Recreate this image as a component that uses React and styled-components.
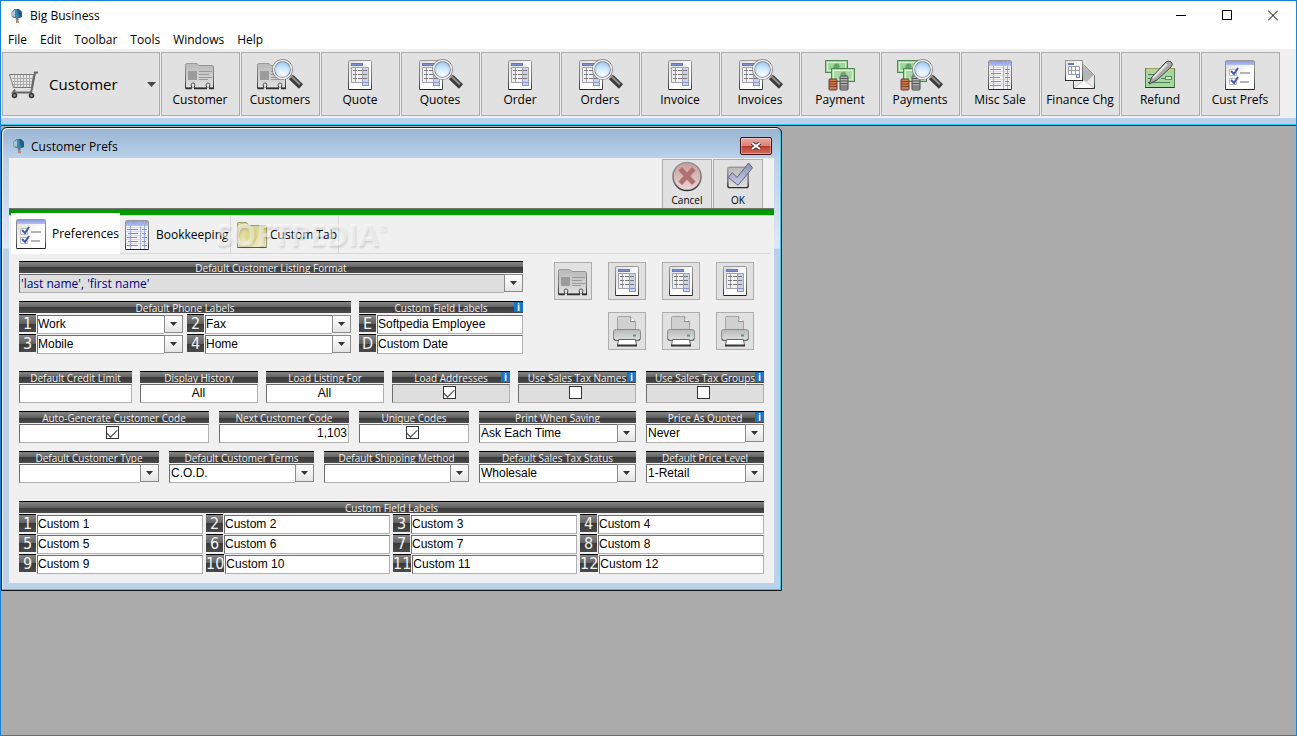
import React from 'react';
import styled, { createGlobalStyle, css } from 'styled-components';

const GlobalStyle = createGlobalStyle`
  * {
    box-sizing: border-box;
  }
  body {
    margin: 0;
    font-family: 'Open Sans', 'Noto Sans', sans-serif;
    font-size: 12px;
    color: #000;
  }
  button,
  input,
  select {
    font: inherit;
    color: inherit;
    margin: 0;
    padding: 0;
    border: 0;
    border-radius: 0;
    background: none;
  }
`;

/* ---------- application window ---------- */

const AppWindow = styled.div`
  display: flex;
  flex-direction: column;
  min-height: 100vh;
  border: 1px solid #1883d7;
  background: #fff;
`;

const TitleBar = styled.header`
  display: flex;
  align-items: center;
  height: 29px;
  padding-left: 8px;
`;

const AppTitle = styled.h1`
  flex: 1;
  margin: 0 0 0 5px;
  font-size: 12px;
  font-weight: 400;
`;

const WindowControl = styled.button`
  display: grid;
  place-items: center;
  width: 46px;
  height: 29px;
`;

const MenuBar = styled.nav`
  display: flex;
  height: 19px;
  button {
    padding: 0 6px 0 7px;
    line-height: 20px;
  }
`;

const Toolbar = styled.div`
  display: flex;
  gap: 1px;
  padding: 3px 1px 2px;
  background: #f0f0f0;
`;

const raised = css`
  background: #e1e1e1;
  border: 1px solid #adadad;
`;

const ModulePicker = styled.label`
  ${raised}
  display: flex;
  align-items: center;
  flex: 0 0 158px;
  height: 64px;
  padding: 0 3px 0 5px;
  select {
    appearance: none;
    flex: 1;
    min-width: 0;
    height: 62px;
    margin-left: 9px;
    font-size: 15px;
  }
`;

const ToolButton = styled.button`
  ${raised}
  display: flex;
  flex-direction: column;
  align-items: center;
  flex: 0 0 79px;
  height: 64px;
  padding: 6px 1px 0 0;
  line-height: 17px;
  white-space: nowrap;
`;

const Workspace = styled.main`
  flex: 1;
  padding-top: 1px;
  background: #ababab;
  border-top: 1px solid #333;
`;

const ToolbarEdge = styled.div`
  height: 7px;
  background: #b9d1ea;
  border-bottom: 1px solid #35c8ec;
`;

/* ---------- child window ---------- */

const ChildWindow = styled.section`
  width: 781px;
  max-width: 100%;
  padding: 0 7px 7px;
  border: 1px solid #111;
  border-radius: 6px 6px 0 0;
  background: linear-gradient(
    #99b4d1 0,
    #b9d1ea 30px,
    #dde9f6 120px,
    #b9d1ea 121px
  );
  box-shadow: inset -1px -1px 0 #35c8ec, inset 1px 1px 0 #f4f8fc;
`;

const ChildTitleBar = styled.header`
  display: flex;
  align-items: center;
  height: 30px;
  padding: 6px 2px 0 2px;
  h2 {
    flex: 1;
    margin: 0 0 0 4px;
    font-size: 12px;
    font-weight: 400;
  }
`;

const CloseButton = styled.button`
  display: grid;
  place-items: center;
  width: 32px;
  height: 18px;
  border: 1px solid #3f1220;
  border-radius: 2px;
  background: linear-gradient(#e8a79c, #d98378 48%, #b8392a 50%, #d0705c);
  box-shadow: inset 0 0 0 1px rgba(255, 255, 255, 0.35);
`;

const ChildBody = styled.div`
  background: #f0f0f0;
`;

const ActionBar = styled.div`
  display: flex;
  justify-content: flex-end;
  gap: 1px;
  height: 50px;
  padding: 1px 11px 0 0;
`;

const ActionButton = styled.button`
  ${raised}
  border-bottom: 0;
  display: flex;
  flex-direction: column;
  align-items: center;
  width: 50px;
  font-size: 10px;
  line-height: 16px;
`;

const GreenRule = styled.div`
  height: 8px;
  background: #090;
  border-top: 1px solid #777;
  border-bottom: 1px solid #c4d4c4;
`;

const TabStrip = styled.div`
  position: relative;
  display: flex;
  height: 38px;
  margin: 0 4px 0 2px;
  border-bottom: 1px solid #d9d9d9;
`;

const Tab = styled.button`
  display: flex;
  align-items: center;
  gap: ${(props) => props.$gap}px;
  width: ${(props) => props.$width}px;
  padding-left: ${(props) => (props.$active ? 4 : 5)}px;
  border-right: 1px solid #d9d9d9;
  white-space: nowrap;
  ${(props) =>
    props.$active &&
    css`
      position: relative;
      height: 41px;
      margin-top: -3px;
      background: #fff;
      border-right: 0;
    `}
`;

const Watermark = styled.span`
  position: absolute;
  left: 205px;
  top: -1px;
  font-size: 30px;
  font-weight: 700;
  line-height: 40px;
  color: rgba(255, 255, 255, 0.5);
  text-shadow: 1px 2px 2px rgba(0, 0, 0, 0.12);
  pointer-events: none;
  sup {
    font-size: 10px;
    line-height: 10px;
    vertical-align: 14px;
  }
`;

/* ---------- form ---------- */

const Form = styled.form`
  padding: 7px 10px 9px;
`;

const TopArea = styled.div`
  display: flex;
  justify-content: space-between;
  padding-right: 10px;
`;

const TopFields = styled.div`
  display: grid;
  gap: 8px;
  flex: 0 1 504px;
`;

const Columns = styled.div`
  display: grid;
  grid-template-columns: ${(props) =>
    props.$cols.map((n) => `minmax(0, ${n}fr)`).join(' ')};
  column-gap: ${(props) => props.$gap}px;
`;

const Stack = styled.div`
  display: grid;
  gap: 8px;
`;

const Options = styled(Columns)`
  margin: 17px 0 18px;
`;

const dark = css`
  color: #f2f2f2;
  border-top: 1px solid #000;
  background: linear-gradient(#858585, #606060 50%, #3a3a3a 50%, #4a4a4a);
`;

const Caption = styled.div`
  ${dark}
  display: flex;
  height: 12px;
  margin-bottom: 1px;
  padding-left: ${(props) => (props.$info ? 9 : 0)}px;
  font-size: 10px;
  line-height: 12px;
  white-space: nowrap;
  label,
  span {
    flex: 1;
    text-align: center;
  }
`;

const InfoButton = styled.button`
  width: 9px;
  height: 10px;
  background: #1874c4;
  color: #fff;
  font-size: 10px;
  font-weight: 700;
  line-height: 10px;
`;

const Box = styled.div`
  display: flex;
  justify-content: center;
  align-items: center;
  height: 19px;
  padding: 0 4px 2px 0;
  border: 1px solid;
  border-color: #6e6e6e #b0b0b0 #b0b0b0 #6e6e6e;
  background: ${(props) => (props.$gray ? '#dedede' : '#fff')};
`;

const TextInput = styled.input`
  flex: 1;
  width: 100%;
  min-width: 0;
  height: 19px;
  padding: 0 1px 1px 0;
  border: 1px solid;
  border-color: #6e6e6e #b0b0b0 #b0b0b0 #6e6e6e;
  background: #fff;
  font-family: 'Liberation Sans', Arial, sans-serif;
  text-align: ${(props) => props.$align || 'left'};
`;

const Check = styled.input`
  appearance: none;
  display: grid;
  justify-items: center;
  width: 13px;
  height: 13px;
  border: 1px solid #333;
  background: #fff;
  &:checked::after {
    content: '';
    width: 5px;
    height: 9px;
    border: solid #333;
    border-width: 0 1px 1px 0;
    transform: rotate(45deg);
  }
`;

const SelectWrap = styled.div`
  display: flex;
  flex: 1;
  min-width: 0;
  height: 19px;
  select {
    appearance: none;
    flex: 1;
    min-width: 0;
    padding: 0 1px 1px;
    border: 1px solid;
    border-color: #6e6e6e #b0b0b0 #b0b0b0 #6e6e6e;
    border-right: 0;
    background: ${(props) => (props.$gray ? '#dedede' : '#fff')};
    color: ${(props) => (props.$gray ? '#00008b' : '#000')};
    font-family: ${(props) =>
      props.$gray ? 'inherit' : "'Liberation Sans', Arial, sans-serif"};
  }
`;

const ArrowBox = styled.span`
  display: grid;
  place-items: center;
  width: 19px;
  height: 18px;
  padding-bottom: 1px;
  border: 1px solid #8a8a8a;
  background: linear-gradient(#fff, #e4e4e4);
`;

const Numbered = styled.div`
  display: flex;
  gap: 1px;
  height: 20px;
  padding-top: 1px;
  select {
    padding-left: 0;
  }
`;

const NumberLabel = styled.label`
  ${dark}
  flex: 0 0 17px;
  height: 18px;
  margin-top: -1px;
  font-family: 'DejaVu Sans Condensed', 'DejaVu Sans', sans-serif;
  font-stretch: condensed;
  font-size: 16px;
  line-height: 18px;
  text-align: center;
  white-space: nowrap;
`;

const IconGrid = styled.div`
  display: grid;
  grid-template-columns: repeat(4, 38px);
  grid-auto-rows: 38px;
  gap: 12px 16px;
  padding-top: 1px;
`;

const SquareButton = styled.button`
  ${raised}
  display: grid;
  place-items: center;
  &.second-column {
    grid-column: 2;
  }
`;

/* ---------- icons ---------- */

const DefsSvg = styled.svg`
  position: absolute;
  width: 0;
  height: 0;
`;

const IconDefs = () => (
  <DefsSvg aria-hidden="true">
    <defs>
      <linearGradient id="paper" x1="0" y1="0" x2="1" y2="1">
        <stop offset="0" stopColor="#dcdcdc" />
        <stop offset="0.6" stopColor="#fff" />
      </linearGradient>
      <linearGradient id="metal" x1="0" y1="0" x2="0" y2="1">
        <stop offset="0" stopColor="#b9b9b9" />
        <stop offset="1" stopColor="#e0e0e0" />
      </linearGradient>
      <linearGradient id="outline" x1="0" y1="0" x2="0" y2="1">
        <stop offset="0" stopColor="#9a9a9a" />
        <stop offset="0.7" stopColor="#6a6a6a" />
        <stop offset="1" stopColor="#2a2a2a" />
      </linearGradient>
      <radialGradient id="lens" cx="0.5" cy="0.8" r="0.8">
        <stop offset="0" stopColor="#fafdff" />
        <stop offset="0.5" stopColor="#cfe8ff" />
        <stop offset="1" stopColor="#8cc0f4" />
      </radialGradient>
      <linearGradient id="banner" x1="0" y1="0" x2="0" y2="1">
        <stop offset="0" stopColor="#8c9be0" />
        <stop offset="1" stopColor="#b4c0f6" />
      </linearGradient>
      <linearGradient id="folder" x1="0" y1="0" x2="0" y2="1">
        <stop offset="0" stopColor="#d3cf8e" />
        <stop offset="1" stopColor="#efecc0" />
      </linearGradient>
      <linearGradient id="tick" x1="0" y1="0" x2="0" y2="1">
        <stop offset="0" stopColor="#8992b8" />
        <stop offset="1" stopColor="#c5cdea" />
      </linearGradient>
      <linearGradient id="red" x1="0" y1="0" x2="0" y2="1">
        <stop offset="0" stopColor="#c99c9c" />
        <stop offset="1" stopColor="#e8d6d6" />
      </linearGradient>
    </defs>
  </DefsSvg>
);

const Svg = ({ w = 32, h = 32, children }) => (
  <svg width={w} height={h} viewBox={`0 0 ${w} ${h}`} aria-hidden="true">
    {children}
  </svg>
);

const Report = () => (
  <g>
    <rect x="0.5" y="1.5" width="23" height="29" rx="1" fill="url(#paper)" stroke="url(#outline)" />
    <path d="M0.5 30.5h23" stroke="#222" />
    <rect x="3.5" y="4.5" width="11" height="2" fill="#7c90d4" stroke="#6479c0" />
    <path d="M3.5 8.5h17v15h-17z" fill="#f1f1f4" stroke="#a2a2aa" />
    <rect x="14" y="9" width="6" height="15" fill="#cdd2ea" />
    <path d="M7.5 8.5v15M14.5 8.5v15M20.5 8.5v15" stroke="#a2a2aa" />
    <path d="M5 11.5h14M5 15.5h14M5 19.5h14" stroke="#777" strokeDasharray="4 1" />
    <rect x="14.5" y="23.5" width="6" height="3" fill="#cbd5f8" stroke="#8596d4" />
  </g>
);

const Rolodex = () => (
  <g>
    <path
      d="M1.5 29V6q0-1.500 1.500-1.500h10l2 2h13q1.500 0 1.500 1.500v21h-4.500q2-5-1-5t-1 5h-13q2-5-1-5t-1 5z"
      fill="url(#metal)"
      stroke="url(#outline)"
    />
    <path d="M1.500 29.500h6M10 29.500h13M25 29.500h5" stroke="#2d2d2d" strokeWidth="1.500" />
    <rect x="4" y="12" width="9" height="9" fill="#9c9c9c" />
    <path d="M15 12.500h13M15 15.500h10M15 18.500h13M15 20.500h9" stroke="#999" />
  </g>
);

const Money = () => (
  <g>
    <rect x="1.500" y="1.500" width="22" height="12" fill="#9fd49c" stroke="#4c8850" />
    <rect x="3.500" y="3.500" width="18" height="8" fill="none" stroke="#d8f0d4" />
    <circle cx="12.500" cy="7.500" r="3" fill="#5fa566" />
    <rect x="7.500" y="9.500" width="23" height="13" fill="#a8dba4" stroke="#4c8850" />
    <rect x="9.500" y="11.500" width="19" height="9" fill="none" stroke="#dff5da" />
    <circle cx="19.500" cy="15.500" r="3" fill="#6cae70" />
    <rect x="5" y="20" width="8" height="11" rx="1" fill="#d2794f" stroke="#643a28" />
    <path d="M5 22.500h8M5 25h8M5 27.500h8" stroke="#7d442d" />
    <rect x="16" y="17" width="8" height="14" rx="1" fill="#b4b4b4" stroke="#4a4a4a" />
    <path d="M16 19.500h8M16 22h8M16 24.500h8M16 27h8M16 29h8" stroke="#555" />
  </g>
);

const Glass = () => (
  <g>
    <path d="M35 18l10 9.500" stroke="#3a3a3a" strokeWidth="6" />
    <path d="M35 17l9 8.500" stroke="#8f8f8f" strokeWidth="2" />
    <circle cx="26.500" cy="10.500" r="9" fill="url(#lens)" stroke="#777" strokeWidth="3" />
    <circle cx="26.500" cy="10.500" r="9" fill="none" stroke="#efefef" strokeWidth="1.500" />
  </g>
);

const Ledger = () => (
  <g>
    <rect x="0.500" y="1.500" width="23" height="29" rx="1" fill="#f4f4f6" stroke="url(#outline)" />
    <rect x="1" y="2" width="22" height="5" fill="url(#banner)" />
    <path d="M1 8.500h22M1 12.500h22M1 16.500h22M1 20.500h22M1 24.500h22" stroke="#d5d9ee" />
    <path d="M5.500 2v28M15.500 2v28M19.500 2v28" stroke="#a3afe0" />
    <path d="M2 10.500h11M3 14.500h10M2 18.500h10M3 22.500h10M2 26.500h11M17 10.500h5M17 14.500h4M17 18.500h5M17 22.500h4M17 26.500h5" stroke="#8d8d8d" />
    <path d="M0.500 30.500h23" stroke="#222" />
  </g>
);

const Checklist = () => (
  <g>
    <rect x="1.500" y="1.500" width="29" height="29" rx="1" fill="url(#paper)" stroke="url(#outline)" />
    <rect x="2" y="2" width="28" height="4" fill="url(#banner)" />
    <path d="M5.500 10.500h7v6h-7zM5.500 19.500h7v6h-7z" fill="#fff" stroke="#bbb" />
    <path d="M7 12l3 3 4-6M7 21l3 3 4-6" fill="none" stroke="#3f57b4" strokeWidth="2" />
    <path d="M16 14h10M16 23h9" stroke="#b4b4b4" strokeWidth="2" />
    <path d="M1.500 30.500h29" stroke="#222" />
  </g>
);

const FinanceCharge = () => (
  <g>
    <path d="M9.500 29.500v-15l10-9 11 11v13z" fill="#e9e9e9" stroke="url(#outline)" />
    <path d="M18 5l12 11-9 8-3-3z" fill="#b5b5b5" />
    <path d="M10 29l10-8 10 8" fill="#fafafa" stroke="#c4c4c4" />
    <rect x="1.500" y="1.500" width="17" height="20" fill="url(#paper)" stroke="url(#outline)" />
    <rect x="4" y="4" width="6" height="2" fill="#6479c0" />
    <path d="M4.500 7.500h11v8h-11zM7.500 7.500v8M11.500 7.500v8M4.500 11.500h11" fill="none" stroke="#9a9aa8" />
    <rect x="12.500" y="15.500" width="3" height="3" fill="#dbe2fb" stroke="#6f82cc" />
  </g>
);

const RefundCheck = () => (
  <g>
    <rect x="1.500" y="9.500" width="29" height="19" fill="#a5d8a0" stroke="#567a56" />
    <path d="M2 10.500h28" stroke="#dcc77c" strokeWidth="2" />
    <path d="M4 15.500h9M4 19.500h7M4 23.500h22M17 19.500h4" stroke="#4e7e50" />
    <rect x="21.500" y="17.500" width="6" height="3" fill="#c8eec2" stroke="#5b8a5b" />
    <path d="M1.500 28.500h29" stroke="#333" />
    <path d="M5 25l3-7L22 3q2-2 5 0t0 5L13 21z" fill="#a9a9a9" stroke="#444" />
    <path d="M9 19L23 5" stroke="#e4e4e4" strokeWidth="2" />
  </g>
);

const Printer = () => (
  <g>
    <path d="M6.500 15.500v-13q0-1 1-1h12l5 5v9z" fill="#d0d0d0" stroke="#a4a4a4" />
    <path d="M19.500 1.500q1 4 0 5h5" fill="#fff" stroke="#8b8b8b" />
    <path d="M2.500 16.500q0-2 3-2h21q3 0 3 2v7q0 2-2 2h-23q-2 0-2-2z" fill="url(#metal)" stroke="#8a8a8a" />
    <path d="M3 23.500q0 2 3 2h20q3 0 3-2" fill="none" stroke="#555" />
    <path d="M7.500 24.500h17l1 6h-19z" fill="#fff" stroke="#666" />
    <path d="M6 30.500h20" stroke="#333" strokeWidth="2" />
    <path d="M22 20.500h3" stroke="#3fa77d" strokeWidth="2" />
  </g>
);

const Folder = () => (
  <g>
    <path d="M1.500 28.500v-24q0-1 1-1h8l2 3h17q1 0 1 1v21z" fill="url(#folder)" stroke="#a09c68" />
    <circle cx="15" cy="16" r="7" fill="#dcd775" opacity="0.600" />
    <path d="M1.500 28.500h29" stroke="#5c5a3c" />
  </g>
);

const Cart = () => (
  <Svg w={32} h={30}>
    <path d="M1.500 5.500h24l-2 13h-18z" fill="#e8e8e8" stroke="#777" />
    <path d="M4 9.500h20M5 12.500h19M5 15.500h18M6.500 6v12M9.500 6v12M12.500 6v12M15.500 6v12M18.500 6v12M21.500 6v12" stroke="#aaa" />
    <path d="M30 3.500h-3l-3 16-1 4H5l2-3" fill="none" stroke="#666" strokeWidth="2" />
    <circle cx="6.500" cy="26.500" r="2" fill="#999" stroke="#333" strokeWidth="1.500" />
    <circle cx="23.500" cy="26.500" r="2" fill="#999" stroke="#333" strokeWidth="1.500" />
  </Svg>
);

const AppLogo = () => (
  <Svg w={16} h={16}>
    <path d="M2.500 8V4l3-3h4l3.500 3v5l-3 1H4.500z" fill="#3c86ae" />
    <path d="M8 1l2 0 3 3v5l-3 1z" fill="#205e86" />
    <path d="M3 8V4l3-2v7z" fill="#a9c6d4" />
    <path d="M6.500 10h3v2l-1 1h-1z" fill="#777" />
    <path d="M7 13h3v2H7z" fill="#c08068" />
  </Svg>
);

const CancelIcon = () => (
  <Svg w={32} h={33}>
    <circle cx="16" cy="17" r="14.500" fill="url(#red)" stroke="url(#outline)" strokeWidth="1.500" />
    <path d="M9 9l14 15M23 9L9 24" stroke="#b07070" strokeWidth="5" />
  </Svg>
);

const OkIcon = () => (
  <Svg w={32} h={33}>
    <rect x="5.500" y="7.500" width="21" height="21" rx="2" fill="url(#metal)" stroke="url(#outline)" strokeWidth="1.500" />
    <path d="M6 18l4-5 5 5L27 3l4 5-15 18z" fill="url(#tick)" stroke="#5b6076" />
  </Svg>
);

const Arrow = () => (
  <svg width="9" height="5" viewBox="0 0 9 5" aria-hidden="true">
    <path d="M0 0h9L4.500 5z" fill="#444" />
  </svg>
);

const SmallArrow = () => (
  <svg width="7" height="4" viewBox="0 0 7 4" aria-hidden="true">
    <path d="M0 0h7L3.500 4z" fill="#333" />
  </svg>
);

/* ---------- data ---------- */

const menus = ['File', 'Edit', 'Toolbar', 'Tools', 'Windows', 'Help'];

const tools = [
  { label: 'Customer', icon: Rolodex },
  { label: 'Customers', icon: Rolodex, search: true },
  { label: 'Quote', icon: Report, narrow: true },
  { label: 'Quotes', icon: Report, search: true, narrow: true },
  { label: 'Order', icon: Report, narrow: true },
  { label: 'Orders', icon: Report, search: true, narrow: true },
  { label: 'Invoice', icon: Report, narrow: true },
  { label: 'Invoices', icon: Report, search: true, narrow: true },
  { label: 'Payment', icon: Money },
  { label: 'Payments', icon: Money, search: true },
  { label: 'Misc Sale', icon: Ledger, narrow: true },
  { label: 'Finance Chg', icon: FinanceCharge },
  { label: 'Refund', icon: RefundCheck },
  { label: 'Cust Prefs', icon: Checklist },
];

const phones = [
  ['1', 'Work'],
  ['2', 'Fax'],
  ['3', 'Mobile'],
  ['4', 'Home'],
];

const customFields = Array.from({ length: 12 }, (_, i) => i + 1);

/* ---------- form parts ---------- */

const Heading = ({ id, text, info }) => (
  <Caption $info={info}>
    {id ? <label htmlFor={id}>{text}</label> : <span>{text}</span>}
    {info && (
      <InfoButton type="button" aria-label={`About ${text}`}>
        i
      </InfoButton>
    )}
  </Caption>
);

const DropDown = ({ id, value = '', gray }) => (
  <SelectWrap $gray={gray}>
    <select id={id} defaultValue={value}>
      <option>{value}</option>
    </select>
    <ArrowBox>
      <SmallArrow />
    </ArrowBox>
  </SelectWrap>
);

const toId = (text) => text.toLowerCase().replace(/\W+/g, '-');

const SelectField = ({ title, value, info, gray }) => (
  <div>
    <Heading id={toId(title)} text={title} info={info} />
    <DropDown id={toId(title)} value={value} gray={gray} />
  </div>
);

const TextField = ({ title, value = '', align }) => (
  <div>
    <Heading id={toId(title)} text={title} />
    <TextInput id={toId(title)} defaultValue={value} $align={align} />
  </div>
);

const CheckField = ({ title, checked, info, gray }) => (
  <div>
    <Heading id={toId(title)} text={title} info={info} />
    <Box $gray={gray}>
      <Check type="checkbox" id={toId(title)} defaultChecked={checked} />
    </Box>
  </div>
);

const NumberedInput = ({ mark, id, value }) => (
  <Numbered>
    <NumberLabel htmlFor={id}>{mark}</NumberLabel>
    <TextInput id={id} defaultValue={value} />
  </Numbered>
);

const PreferencesForm = () => (
  <Form>
    <TopArea>
      <TopFields>
        <SelectField
          title="Default Customer Listing Format"
          value="'last name', 'first name'"
          gray
        />
        <Columns $cols={[332, 164]} $gap={8}>
          <div>
            <Heading text="Default Phone Labels" />
            <Columns $cols={[1, 1]} $gap={4}>
              {phones.map(([mark, value]) => (
                <Numbered key={mark}>
                  <NumberLabel htmlFor={`phone-${mark}`}>{mark}</NumberLabel>
                  <DropDown id={`phone-${mark}`} value={value} />
                </Numbered>
              ))}
            </Columns>
          </div>
          <div>
            <Heading text="Custom Field Labels" info />
            <NumberedInput mark="E" id="label-e" value="Softpedia Employee" />
            <NumberedInput mark="D" id="label-d" value="Custom Date" />
          </div>
        </Columns>
      </TopFields>
      <IconGrid>
        <SquareButton type="button" aria-label="Customer card">
          <Svg>
            <Rolodex />
          </Svg>
        </SquareButton>
        {['Quote', 'Order', 'Invoice'].map((name) => (
          <SquareButton type="button" key={name} aria-label={`${name} layout`}>
            <Svg w={24}>
              <Report />
            </Svg>
          </SquareButton>
        ))}
        {['Quote', 'Order', 'Invoice'].map((name, i) => (
          <SquareButton
            type="button"
            key={name}
            className={i === 0 ? 'second-column' : undefined}
            aria-label={`${name} printer`}
          >
            <Svg>
              <Printer />
            </Svg>
          </SquareButton>
        ))}
      </IconGrid>
    </TopArea>

    <Options $cols={[617, 118]} $gap={10}>
      <Stack>
        <Columns $cols={[113, 118, 118, 118, 118]} $gap={8}>
          <TextField title="Default Credit Limit" />
          <TextField title="Display History" value="All" align="center" />
          <TextField title="Load Listing For" value="All" align="center" />
          <CheckField title="Load Addresses" checked info gray />
          <CheckField title="Use Sales Tax Names" info gray />
        </Columns>
        <Columns $cols={[190, 130, 110, 157]} $gap={10}>
          <CheckField title="Auto-Generate Customer Code" checked />
          <TextField title="Next Customer Code" value="1,103" align="right" />
          <CheckField title="Unique Codes" checked />
          <SelectField title="Print When Saving" value="Ask Each Time" />
        </Columns>
        <Columns $cols={[140, 145, 145, 157]} $gap={10}>
          <SelectField title="Default Customer Type" />
          <SelectField title="Default Customer Terms" value="C.O.D." />
          <SelectField title="Default Shipping Method" />
          <SelectField title="Default Sales Tax Status" value="Wholesale" />
        </Columns>
      </Stack>
      <Stack>
        <CheckField title="Use Sales Tax Groups" info gray />
        <SelectField title="Price As Quoted" value="Never" info />
        <SelectField title="Default Price Level" value="1-Retail" />
      </Stack>
    </Options>

    <Heading text="Custom Field Labels" />
    <Columns $cols={[1, 1, 1, 1]} $gap={3}>
      {customFields.map((n) => (
        <NumberedInput key={n} mark={n} id={`custom-${n}`} value={`Custom ${n}`} />
      ))}
    </Columns>
  </Form>
);

export default function App() {
  return (
    <AppWindow>
      <GlobalStyle />
      <IconDefs />
      <TitleBar>
        <AppLogo />
        <AppTitle>Big Business</AppTitle>
        <WindowControl aria-label="Minimize">
          <Svg w={10} h={11}>
            <path d="M0 5.500h10" stroke="#000" />
          </Svg>
        </WindowControl>
        <WindowControl aria-label="Maximize">
          <Svg w={10} h={11}>
            <rect x="0.500" y="0.500" width="9" height="9" fill="none" stroke="#000" />
          </Svg>
        </WindowControl>
        <WindowControl aria-label="Close">
          <Svg w={10} h={11}>
            <path d="M0 0.500l10 10M10 0.500l-10 10" stroke="#000" />
          </Svg>
        </WindowControl>
      </TitleBar>
      <MenuBar>
        {menus.map((name) => (
          <button type="button" key={name}>
            {name}
          </button>
        ))}
      </MenuBar>
      <Toolbar>
        <ModulePicker>
          <Cart />
          <select aria-label="Module" defaultValue="Customer">
            <option>Customer</option>
          </select>
          <Arrow />
        </ModulePicker>
        {tools.map(({ label, icon: Icon, search, narrow }) => (
          <ToolButton type="button" key={label}>
            <Svg w={search ? 48 : narrow ? 24 : 32}>
              <g transform={search && narrow ? 'translate(3 0)' : undefined}>
                <Icon />
              </g>
              {search && <Glass />}
            </Svg>
            {label}
          </ToolButton>
        ))}
      </Toolbar>
      <ToolbarEdge />
      <Workspace>
        <ChildWindow>
          <ChildTitleBar>
            <AppLogo />
            <h2>Customer Prefs</h2>
            <CloseButton aria-label="Close Customer Prefs">
              <Svg w={12} h={8}>
                <path d="M2 1l8 6M10 1L2 7" stroke="#5a2a34" strokeWidth="4" />
                <path d="M2 1l8 6M10 1L2 7" stroke="#fff" strokeWidth="2" />
              </Svg>
            </CloseButton>
          </ChildTitleBar>
          <ChildBody>
            <ActionBar>
              <ActionButton type="button">
                <CancelIcon />
                Cancel
              </ActionButton>
              <ActionButton type="button">
                <OkIcon />
                OK
              </ActionButton>
            </ActionBar>
            <GreenRule />
            <TabStrip role="tablist">
              <Tab role="tab" aria-selected="true" $active $gap={5} $width={109}>
                <Svg>
                  <Checklist />
                </Svg>
                Preferences
              </Tab>
              <Tab role="tab" aria-selected="false" $gap={6} $width={111}>
                <Svg w={25}>
                  <Ledger />
                </Svg>
                Bookkeeping
              </Tab>
              <Tab role="tab" aria-selected="false" $gap={2} $width={108}>
                <Svg>
                  <Folder />
                </Svg>
                Custom Tab
              </Tab>
              <Watermark>
                SOFTPEDIA<sup>®</sup>
              </Watermark>
            </TabStrip>
            <PreferencesForm />
          </ChildBody>
        </ChildWindow>
      </Workspace>
    </AppWindow>
  );
}
